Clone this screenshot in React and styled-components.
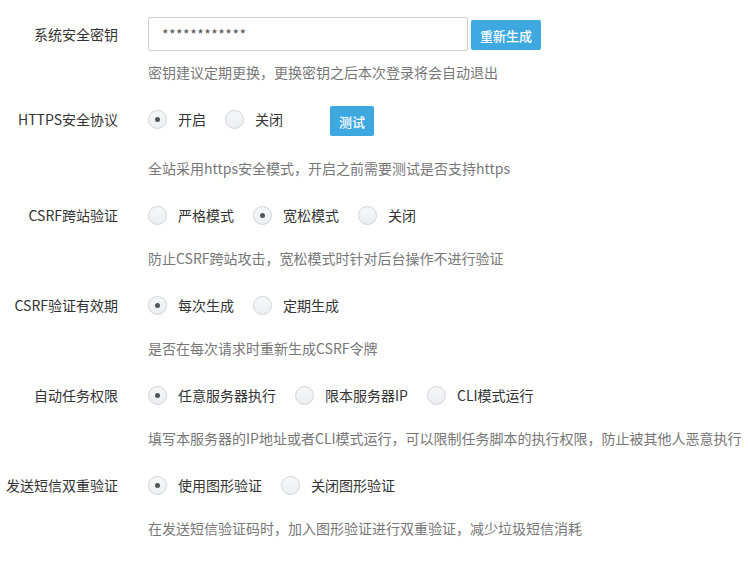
import React from "react";
import styled, { createGlobalStyle } from "styled-components";

const GlobalStyle = createGlobalStyle`
  body {
    margin: 0;
    background: #fff;
    font-family: "Noto Sans CJK SC", "Noto Sans", sans-serif;
    font-size: 14px;
    color: #333;
  }
`;

const Form = styled.form`
  padding-top: 17px;
`;

const Group = styled.div`
  display: flex;
  margin-bottom: 20px;
`;

const Label = styled.label`
  width: 118px;
  flex: none;
  padding-right: 30px;
  text-align: right;
  line-height: 34px;
  height: 34px;
  color: #333;
  white-space: nowrap;
`;

const Controls = styled.div`
  display: flex;
  flex-direction: column;
`;

const Line = styled.div`
  display: flex;
  align-items: center;
  height: 34px;
`;

const Input = styled.input`
  box-sizing: border-box;
  width: 320px;
  height: 34px;
  padding: 0 13px;
  border: 1px solid #ccc;
  border-radius: 2px;
  font-family: inherit;
  font-size: 14px;
  color: #555;
  letter-spacing: 0.5px;
  outline: none;
`;

const Button = styled.button`
  box-sizing: border-box;
  height: 30px;
  padding: 0 9px;
  margin-left: ${(p) => p.$offset || 0}px;
  margin-top: ${(p) => p.$drop || 0}px;
  border: none;
  border-radius: 2px;
  background: #3ea8e0;
  color: #fff;
  font-family: inherit;
  font-size: 13px;
  font-weight: 500;
  cursor: pointer;
`;

const RadioItem = styled.label`
  display: flex;
  align-items: center;
  margin-right: 19px;
  color: #333;
  cursor: pointer;
`;

const Dot = styled.span`
  box-sizing: border-box;
  width: 19px;
  height: 19px;
  margin-right: 11px;
  border-radius: 50%;
  border: 1px solid #d2d4d8;
  background: linear-gradient(#f6f7f9, #eceef1);
  display: flex;
  align-items: center;
  justify-content: center;
  &::after {
    content: "";
    width: 5px;
    height: 5px;
    border-radius: 50%;
    background: ${(p) => (p.$on ? "#555" : "transparent")};
  }
`;

const Help = styled.div`
  margin-top: ${(p) => p.$gap}px;
  line-height: 20px;
  color: #777;
  white-space: nowrap;
`;

const Radio = ({ on, children }) => (
  <RadioItem>
    <Dot $on={on} />
    {children}
  </RadioItem>
);

const RadioRow = ({ label, options, checked, help, extra, gap = 16 }) => (
  <Group>
    <Label>{label}</Label>
    <Controls>
      <Line>
        {options.map((o, i) => (
          <Radio key={o} on={i === checked}>
            {o}
          </Radio>
        ))}
        {extra}
      </Line>
      <Help $gap={gap}>{help}</Help>
    </Controls>
  </Group>
);

export default function App() {
  return (
    <>
      <GlobalStyle />
      <Form>
        <Group>
          <Label>系统安全密钥</Label>
          <Controls>
            <Line>
              <Input type="text" defaultValue="************" readOnly />
              <Button type="button" $offset={3} $drop={2}>
                重新生成
              </Button>
            </Line>
            <Help $gap={11}>密钥建议定期更换，更换密钥之后本次登录将会自动退出</Help>
          </Controls>
        </Group>
        <RadioRow
          label="HTTPS安全协议"
          options={["开启", "关闭"]}
          checked={0}
          gap={22}
          extra={
            <Button type="button" $offset={28} $drop={4}>
              测试
            </Button>
          }
          help="全站采用https安全模式，开启之前需要测试是否支持https"
        />
        <RadioRow
          label="CSRF跨站验证"
          options={["严格模式", "宽松模式", "关闭"]}
          checked={1}
          help="防止CSRF跨站攻击，宽松模式时针对后台操作不进行验证"
        />
        <RadioRow
          label="CSRF验证有效期"
          options={["每次生成", "定期生成"]}
          checked={0}
          help="是否在每次请求时重新生成CSRF令牌"
        />
        <RadioRow
          label="自动任务权限"
          options={["任意服务器执行", "限本服务器IP", "CLI模式运行"]}
          checked={0}
          help="填写本服务器的IP地址或者CLI模式运行，可以限制任务脚本的执行权限，防止被其他人恶意执行"
        />
        <RadioRow
          label="发送短信双重验证"
          options={["使用图形验证", "关闭图形验证"]}
          checked={0}
          help="在发送短信验证码时，加入图形验证进行双重验证，减少垃圾短信消耗"
        />
      </Form>
    </>
  );
}
